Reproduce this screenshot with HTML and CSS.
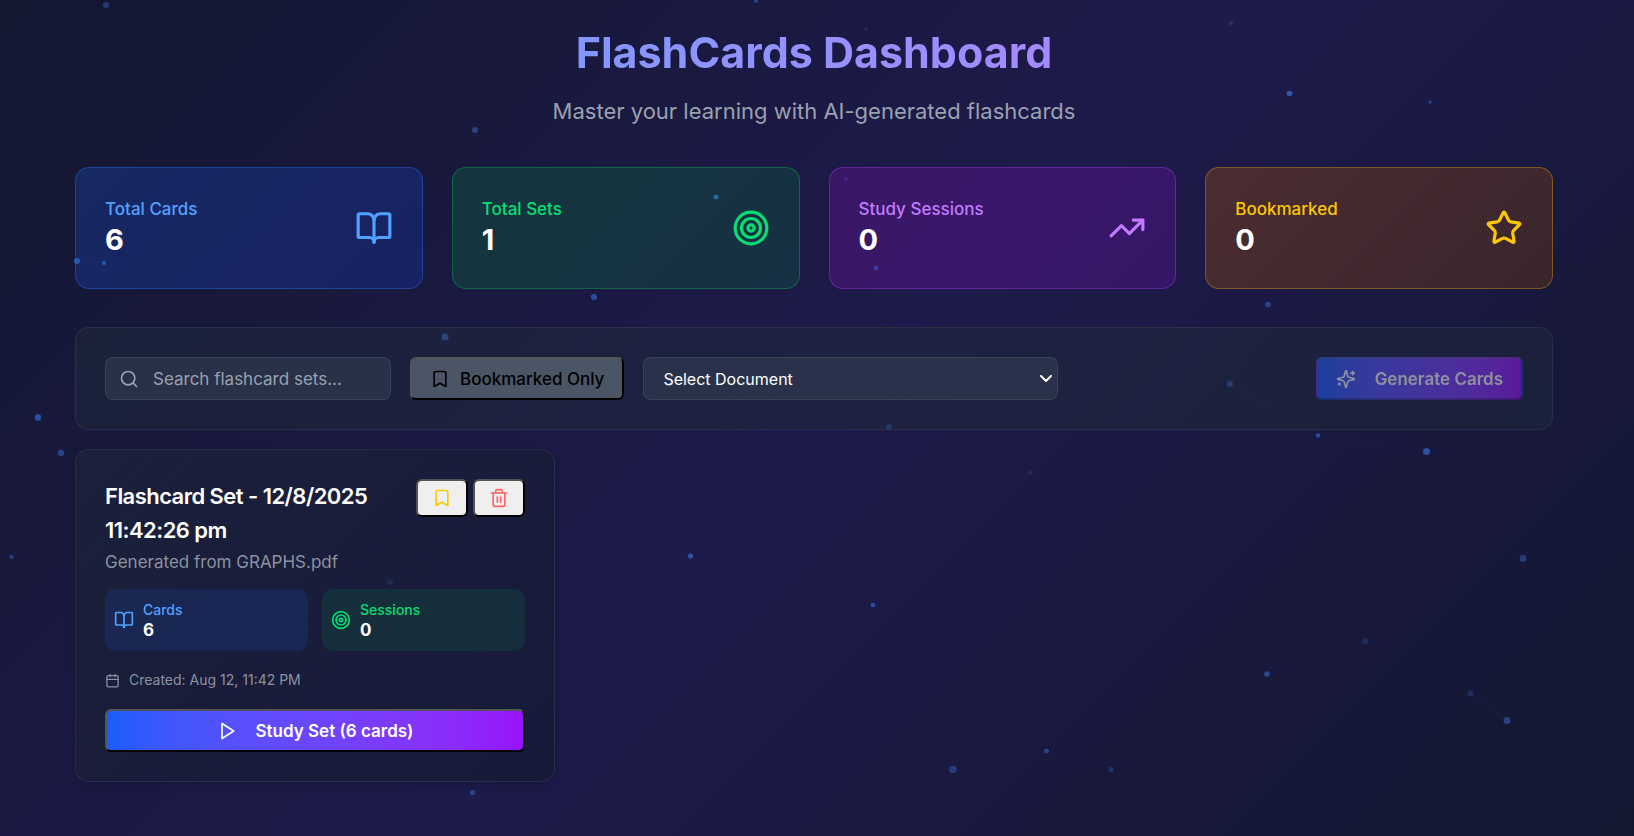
FILE: index.html
```html
<!DOCTYPE html>
<html lang="en">
<head>
<meta charset="utf-8">
<meta name="viewport" content="width=device-width, initial-scale=1">
<title>FlashCards Dashboard</title>
<link rel="stylesheet" href="styles.css">
</head>
<body>
<svg class="particles" aria-hidden="true">
  <g class="links">
    <path class="link-near" d="M77 261 104 263M38 417 61 453M1470 693 1507 720"/>
    <path class="link-far" d="M846 179 876 268M1231 23 1289 93M1268 304 1230 384 1318 435 1427 452M953 769 1046 751 1111 769M1365 641 1267 674"/>
  </g>
  <g class="dots">
    <circle cx="106" cy="5" r="3" opacity=".35"/>
    <circle cx="475" cy="130" r="3" opacity=".4"/>
    <circle cx="77" cy="261" r="3" opacity=".6"/>
    <circle cx="104" cy="263" r="2" opacity=".6"/>
    <circle cx="756" cy="1" r="2" opacity=".4"/>
    <circle cx="866" cy="29" r="2" opacity=".15"/>
    <circle cx="716" cy="197" r="2.5" opacity=".65"/>
    <circle cx="594" cy="297" r="3" opacity=".5"/>
    <circle cx="846" cy="179" r="2" opacity=".25"/>
    <circle cx="876" cy="268" r="2.3" opacity=".5"/>
    <circle cx="1231" cy="23" r="2" opacity=".25"/>
    <circle cx="1289.500" cy="93.500" r="2.800" opacity=".6"/>
    <circle cx="1430" cy="102" r="1.700" opacity=".4"/>
    <circle cx="445" cy="337" r="3.500" opacity=".7"/>
    <circle cx="889" cy="427" r="3" opacity=".45"/>
    <circle cx="1230" cy="384" r="3" opacity=".5"/>
    <circle cx="1268" cy="304.500" r="2.800" opacity=".4"/>
    <circle cx="1318" cy="435.500" r="2.300" opacity=".5"/>
    <circle cx="1426.500" cy="451.500" r="3.500" opacity=".55"/>
    <circle cx="38" cy="417.500" r="3.200" opacity=".55"/>
    <circle cx="61" cy="453" r="3.200" opacity=".4"/>
    <circle cx="11.500" cy="557" r="2" opacity=".4"/>
    <circle cx="390" cy="582" r="3" opacity=".3"/>
    <circle cx="472.500" cy="792.500" r="2.600" opacity=".4"/>
    <circle cx="690.500" cy="556" r="2.600" opacity=".55"/>
    <circle cx="873" cy="605" r="2.300" opacity=".55"/>
    <circle cx="1030" cy="472.500" r="2.500" opacity=".15"/>
    <circle cx="953" cy="769.500" r="3.700" opacity=".35"/>
    <circle cx="1046.500" cy="751" r="2.500" opacity=".4"/>
    <circle cx="1111" cy="769.500" r="2.500" opacity=".25"/>
    <circle cx="1523" cy="558.500" r="3.400" opacity=".35"/>
    <circle cx="1365.500" cy="641" r="3" opacity=".2"/>
    <circle cx="1267" cy="674" r="2.800" opacity=".45"/>
    <circle cx="1470.500" cy="693.500" r="3" opacity=".2"/>
    <circle cx="1507" cy="720.500" r="3.500" opacity=".4"/>
  </g>
</svg>

<svg class="sprite" aria-hidden="true">
  <symbol id="book" viewBox="0 0 24 24"><path d="M12 7v14"/><path d="M3 18a1 1 0 0 1-1-1V4a1 1 0 0 1 1-1h5a4 4 0 0 1 4 4 4 4 0 0 1 4-4h5a1 1 0 0 1 1 1v13a1 1 0 0 1-1 1h-6a3 3 0 0 0-3 3 3 3 0 0 0-3-3z"/></symbol>
  <symbol id="target" viewBox="0 0 24 24"><circle cx="12" cy="12" r="10"/><circle cx="12" cy="12" r="6"/><circle cx="12" cy="12" r="2"/></symbol>
  <symbol id="trend" viewBox="0 0 24 24"><path d="M22 7 13.5 15.500 8.500 10.500 2 17"/><path d="M16 7h6v6"/></symbol>
  <symbol id="star" viewBox="0 0 24 24"><path d="M11.525 2.295a.53.53 0 0 1 .95 0l2.310 4.679a2.123 2.123 0 0 0 1.595 1.160l5.166.756a.53.53 0 0 1 .294.904l-3.736 3.638a2.123 2.123 0 0 0-.611 1.878l.882 5.140a.53.53 0 0 1-.771.560l-4.618-2.428a2.122 2.122 0 0 0-1.973 0L6.396 21.010a.53.53 0 0 1-.770-.560l.881-5.139a2.122 2.122 0 0 0-.611-1.879L2.160 9.795a.53.53 0 0 1 .294-.906l5.165-.755a2.122 2.122 0 0 0 1.597-1.160z"/></symbol>
  <symbol id="bookmark" viewBox="0 0 24 24"><path d="m19 21-7-4-7 4V5a2 2 0 0 1 2-2h10a2 2 0 0 1 2 2v16z"/></symbol>
  <symbol id="search" viewBox="0 0 24 24"><circle cx="11" cy="11" r="8"/><path d="m21 21-4.300-4.300"/></symbol>
  <symbol id="sparkles" viewBox="0 0 24 24"><path d="M9.937 15.500A2 2 0 0 0 8.500 14.063l-6.135-1.582a.5.5 0 0 1 0-.962L8.500 9.936A2 2 0 0 0 9.937 8.500l1.582-6.135a.5.5 0 0 1 .963 0L14.063 8.500A2 2 0 0 0 15.500 9.937l6.135 1.581a.5.5 0 0 1 0 .964L15.500 14.063a2 2 0 0 0-1.437 1.437l-1.582 6.135a.5.5 0 0 1-.963 0z"/><path d="M20 3v4M22 5h-4M4 17v2M5 18H3"/></symbol>
  <symbol id="trash" viewBox="0 0 24 24"><path d="M3 6h18"/><path d="M19 6v14a2 2 0 0 1-2 2H7a2 2 0 0 1-2-2V6"/><path d="M8 6V4a2 2 0 0 1 2-2h4a2 2 0 0 1 2 2v2M10 11v6M14 11v6"/></symbol>
  <symbol id="calendar" viewBox="0 0 24 24"><path d="M8 2v4M16 2v4M3 10h18"/><rect x="3" y="4" width="18" height="18" rx="2"/></symbol>
  <symbol id="play" viewBox="0 0 24 24"><path d="M6 3 20 12 6 21z"/></symbol>
  <symbol id="chevron" viewBox="0 0 12 8"><path d="M1 1 6 6 11 1"/></symbol>
</svg>

<main class="page">
  <header class="header">
    <h1 class="title">FlashCards Dashboard</h1>
    <p class="subtitle">Master your learning with AI-generated flashcards</p>
  </header>

  <section class="stats" aria-label="Statistics">
    <div class="stat stat-blue">
      <div><p class="stat-label">Total Cards</p><p class="stat-value">6</p></div>
      <svg class="icon icon-large"><use href="#book"/></svg>
    </div>
    <div class="stat stat-green">
      <div><p class="stat-label">Total Sets</p><p class="stat-value">1</p></div>
      <svg class="icon icon-large"><use href="#target"/></svg>
    </div>
    <div class="stat stat-purple">
      <div><p class="stat-label">Study Sessions</p><p class="stat-value">0</p></div>
      <svg class="icon icon-large"><use href="#trend"/></svg>
    </div>
    <div class="stat stat-yellow">
      <div><p class="stat-label">Bookmarked</p><p class="stat-value">0</p></div>
      <svg class="icon icon-large"><use href="#star"/></svg>
    </div>
  </section>

  <section class="toolbar panel" aria-label="Filters">
    <label class="search">
      <svg class="icon"><use href="#search"/></svg>
      <input class="search-input" type="text" placeholder="Search flashcard sets..." aria-label="Search flashcard sets">
    </label>
    <button class="button button-filter" type="button"><svg class="icon"><use href="#bookmark"/></svg>Bookmarked Only</button>
    <div class="picker">
      <select class="select" aria-label="Document"><option>Select Document</option></select>
      <svg class="icon chevron" aria-hidden="true"><use href="#chevron"/></svg>
    </div>
    <button class="button button-action button-generate" type="button" disabled><svg class="icon"><use href="#sparkles"/></svg>Generate Cards</button>
  </section>

  <section class="sets" aria-label="Flashcard sets">
    <article class="set panel">
      <div class="set-head">
        <div>
          <h2 class="set-title">Flashcard Set - 12/8/2025 11:42:26 pm</h2>
          <p class="set-source">Generated from GRAPHS.pdf</p>
        </div>
        <div class="set-tools">
          <button class="button button-icon mark" type="button" aria-label="Bookmark"><svg class="icon"><use href="#bookmark"/></svg></button>
          <button class="button button-icon delete" type="button" aria-label="Delete"><svg class="icon"><use href="#trash"/></svg></button>
        </div>
      </div>
      <div class="counts">
        <div class="count count-blue"><svg class="icon"><use href="#book"/></svg><div><p class="count-label">Cards</p><p class="count-value">6</p></div></div>
        <div class="count count-green"><svg class="icon"><use href="#target"/></svg><div><p class="count-label">Sessions</p><p class="count-value">0</p></div></div>
      </div>
      <p class="created"><svg class="icon icon-small"><use href="#calendar"/></svg>Created: Aug 12, 11:42 PM</p>
      <button class="button button-action button-study" type="button"><svg class="icon"><use href="#play"/></svg>Study Set (6 cards)</button>
    </article>
  </section>
</main>
</body>
</html>
```
FILE: styles.css
```css
* {
  box-sizing: border-box;
}

html {
  min-height: 100%;
  background: linear-gradient(135deg, #131730, #1e1a4b 50%, #131730);
}

body {
  margin: 0;
  padding-right: 6px;
  font-family: Inter, "Liberation Sans", sans-serif;
  font-size: 17px;
  line-height: 24px;
  color: #fff;
}

h1, h2, p {
  margin: 0;
}

.particles {
  position: absolute;
  inset: 0;
  width: 100%;
  height: 100%;
  pointer-events: none;
}

.dots {
  fill: #3b82f6;
}

.links {
  fill: none;
}

.link-near {
  stroke: rgba(139, 92, 246, .08);
}

.link-far {
  stroke: rgba(139, 92, 246, .03);
}

.sprite {
  display: none;
}

.icon {
  flex: none;
  width: 20px;
  height: 20px;
  fill: none;
  stroke: currentColor;
  stroke-width: 2;
  stroke-linecap: round;
  stroke-linejoin: round;
}

.icon-large {
  width: 38px;
  height: 38px;
}

.icon-small {
  width: 15px;
  height: 15px;
}

.page {
  position: relative;
  max-width: 1536px;
  margin: 0 auto;
  padding: 28px 29px;
}

.header {
  display: flex;
  flex-direction: column;
  gap: 18px;
  align-items: center;
  margin-bottom: 39px;
  text-align: center;
}

.title {
  align-self: stretch;
  font-size: 43px;
  font-weight: 700;
  line-height: 48px;
  color: transparent;
  background: linear-gradient(90deg in oklab, #51a2ff, #c27aff);
  background-clip: text;
  -webkit-background-clip: text;
}

.subtitle {
  font-size: 22px;
  line-height: 34px;
  color: #99a1af;
}

.stats {
  display: grid;
  grid-template-columns: repeat(4, 1fr);
  gap: 29px;
  margin-bottom: 38px;
}

.stat {
  display: flex;
  align-items: center;
  justify-content: space-between;
  padding: 29px;
  border: 1px solid;
  border-radius: 14px;
}

.stat-label {
  font-weight: 500;
}

.stat-value {
  font-size: 29px;
  font-weight: 700;
  line-height: 38px;
  color: #fff;
}

.stat-blue {
  color: #51a2ff;
  background: linear-gradient(135deg, rgba(28, 88, 232, .25), rgba(24, 62, 210, .25));
  border-color: rgba(43, 127, 255, .35);
}

.stat-green {
  color: #05df72;
  background: linear-gradient(135deg, rgba(5, 160, 62, .22), rgba(0, 130, 54, .22));
  border-color: rgba(0, 201, 80, .35);
}

.stat-purple {
  color: #c27aff;
  background: linear-gradient(135deg, rgba(140, 20, 190, .27), rgba(120, 16, 190, .27));
  border-color: rgba(173, 70, 255, .35);
}

.stat-yellow {
  color: #fcc800;
  background: linear-gradient(135deg, rgba(180, 88, 0, .31), rgba(146, 72, 0, .28));
  border-color: rgba(240, 177, 0, .35);
}

.panel {
  padding: 29px;
  background: rgba(30, 41, 57, .5);
  border: 1px solid rgba(54, 65, 83, .5);
  border-radius: 14px;
}

.toolbar {
  display: flex;
  flex-wrap: wrap;
  gap: 19px;
  margin-bottom: 19px;
}

.search {
  display: flex;
  gap: 14px;
  align-items: center;
  width: 286px;
  padding: 0 13px;
  color: #99a1af;
  background: rgba(54, 65, 83, .5);
  border: 1px solid rgba(74, 85, 101, .5);
  border-radius: 8px;
}

.search-input {
  flex: 1;
  min-width: 0;
  padding: 0;
  font: inherit;
  color: #fff;
  background: none;
  border: 0;
  outline: 0;
}

.search-input::placeholder {
  color: #99a1af;
}

.picker {
  position: relative;
  display: flex;
  width: 415px;
}

.select {
  flex: 1;
  padding: 0 19px;
  font: inherit;
  font-size: 16px;
  color: #fff;
  appearance: none;
  background-color: rgba(54, 65, 83, .5);
  border: 1px solid rgba(74, 85, 101, .5);
  border-radius: 8px;
}

.select option {
  background: #1e2939;
}

.chevron {
  position: absolute;
  top: 18px;
  right: 6px;
  width: 12px;
  height: 8px;
  color: #fff;
  pointer-events: none;
}

.button {
  display: flex;
  gap: 10px;
  align-items: center;
  justify-content: center;
  min-height: 43px;
  padding: 0 18px;
  font: inherit;
  font-weight: 500;
  color: #000;
  background-color: #efefef;
  border: 2px outset #000;
  border-radius: 6px;
}

.button-filter {
  background-color: #4a5565;
}

.button-action {
  gap: 19px;
  font-weight: 600;
  color: #fff;
  background: linear-gradient(90deg in oklab, #155dfc, #9810fa);
}

.button-generate {
  margin-left: auto;
  border-color: rgba(16, 16, 16, .3);
  opacity: .5;
}

.sets {
  display: grid;
  grid-template-columns: repeat(3, 1fr);
  gap: 19px;
}

.set {
  background: linear-gradient(135deg, rgba(30, 41, 57, .5), rgba(16, 24, 40, .5));
  box-shadow: 0 4px 10px rgba(0, 0, 0, .12);
}

.set-head {
  display: flex;
  gap: 14px;
  align-items: flex-start;
  justify-content: space-between;
}

.set-title {
  font-size: 22px;
  font-weight: 600;
  line-height: 34px;
  letter-spacing: -0.025em;
}

.set-source {
  margin-top: 3px;
  color: #8b92a1;
}

.set-tools {
  display: flex;
  gap: 5px;
}

.button-icon {
  min-height: 38px;
  padding: 0 14px;
}

.mark {
  color: #fcc800;
}

.delete {
  color: #ff6467;
}

.counts {
  display: grid;
  grid-template-columns: 1fr 1fr;
  gap: 14px;
  margin-top: 15px;
}

.count {
  display: flex;
  gap: 9px;
  align-items: center;
  padding: 10px 9px;
  line-height: 21px;
  border-radius: 10px;
}

.count-blue {
  color: #51a2ff;
  background: rgba(28, 100, 240, .14);
}

.count-green {
  color: #05df72;
  background: rgba(10, 170, 70, .13);
}

.count-label {
  font-size: 14px;
  font-weight: 500;
}

.count-value {
  font-weight: 700;
  color: #fff;
}

.created {
  display: flex;
  gap: 9px;
  align-items: center;
  margin: 17px 0;
  font-size: 14px;
  color: #8b92a1;
}

.button-study {
  width: 100%;
}
```
